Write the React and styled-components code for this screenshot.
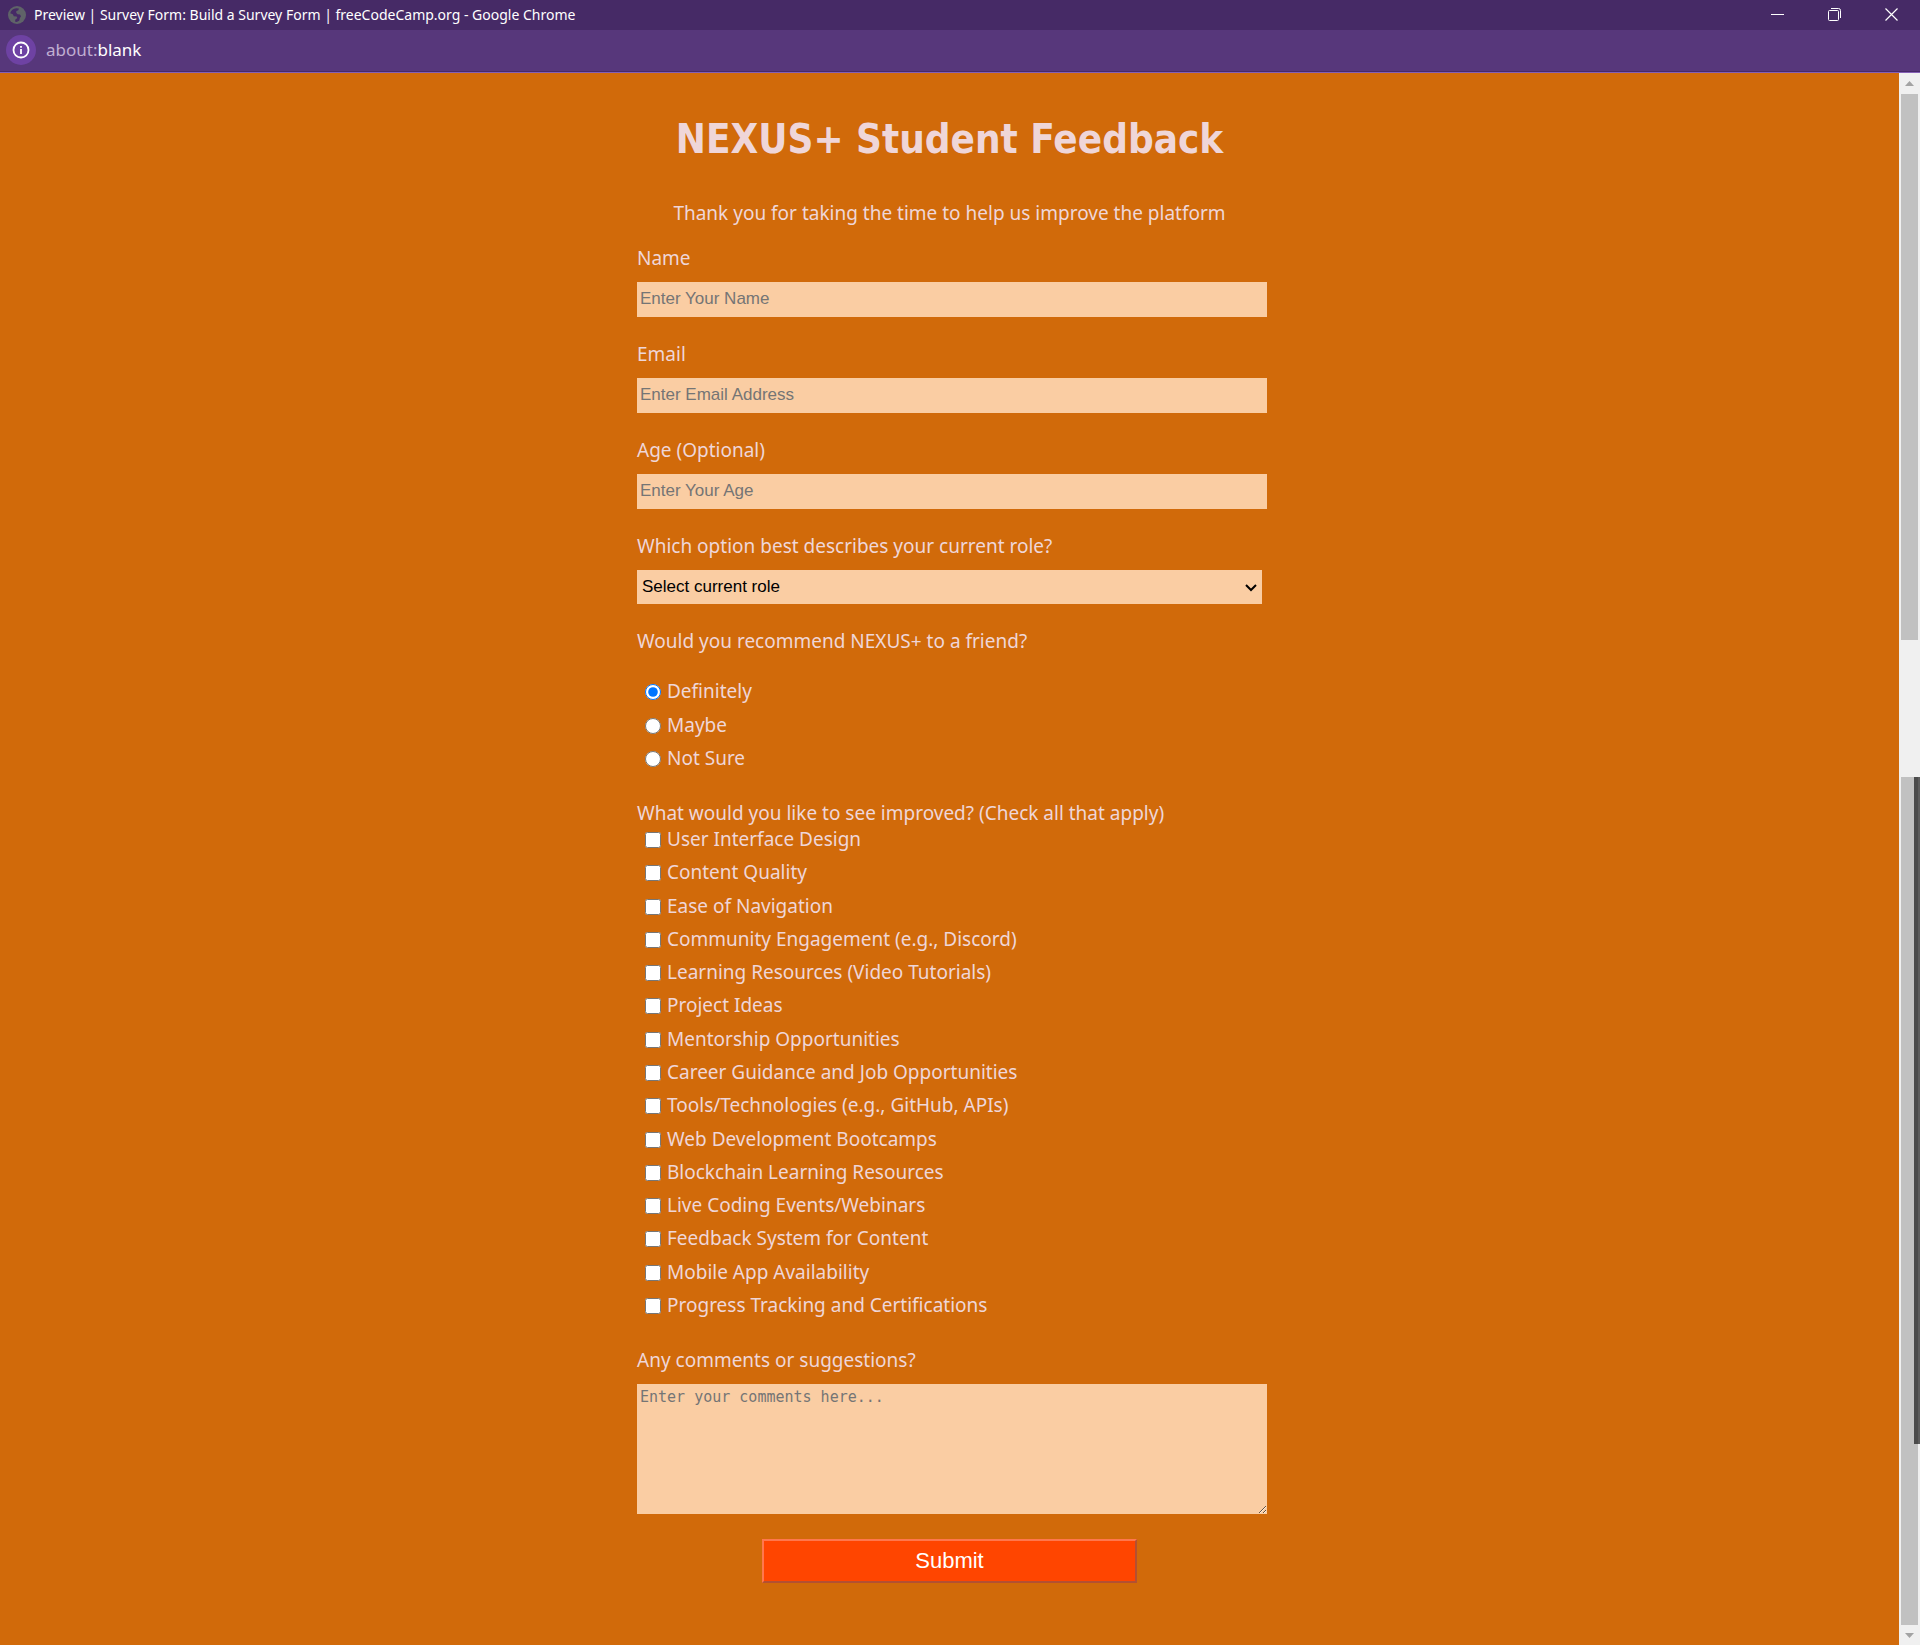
import React from "react";
import styled, { createGlobalStyle } from "styled-components";

const GlobalStyle = createGlobalStyle`
  *, *::before, *::after { box-sizing: border-box; }
  body {
    margin: 0;
    background: #d16a0a;
    color: #efd6d8;
    font: 19px/24px "Noto Sans", Tahoma, "DejaVu Sans", sans-serif;
  }
`;

const Window = styled.div`
  display: flex;
  flex-direction: column;
  min-height: 100vh;
`;

const TitleBar = styled.header`
  display: flex;
  align-items: center;
  gap: 8px;
  height: 30px;
  padding: 0 0 1px 8px;
  background: #462a66;
  color: #fff;
  font: 14px/20px "Noto Sans", "Open Sans", sans-serif;
`;

const WindowTitle = styled.span`
  flex: 1;
`;

const WindowControls = styled.div`
  display: flex;
`;

const WindowButton = styled.button`
  display: flex;
  align-items: center;
  justify-content: center;
  width: 57px;
  height: 29px;
  padding: 0;
  border: 0;
  background: none;
  color: #fff;
`;

const AddressBar = styled.div`
  display: flex;
  align-items: center;
  gap: 10px;
  height: 43px;
  padding: 0 6px 2px;
  background: #57377b;
  border-bottom: 1px solid #8560b5;
  box-shadow: inset 0 -1px 0 #472a6a;
  color: #fff;
  font: 17px/24px "Noto Sans", "Open Sans", sans-serif;
`;

const InfoButton = styled.button`
  display: flex;
  align-items: center;
  justify-content: center;
  width: 30px;
  height: 30px;
  padding: 0;
  border: 0;
  border-radius: 50%;
  background: #6e42a3;
  color: #fff;
`;

const Scheme = styled.span`
  color: #c0aed2;
`;

const Viewport = styled.div`
  display: flex;
  flex: 1;
`;

const Page = styled.main`
  flex: 1;
  padding: 42px 16px 60px;
`;

const Title = styled.h1`
  margin: 0 0 38px;
  font: 700 40px/48px "DejaVu Sans Condensed", Tahoma, sans-serif;
  text-align: center;
`;

const Intro = styled.p`
  margin: 0 0 21px;
  text-align: center;
`;

const Form = styled.form`
  width: 100%;
  max-width: 625px;
  margin: 0 auto;
`;

const Field = styled.div`
  display: flex;
  flex-direction: column;
  gap: 12px;
  margin-bottom: 25px;
`;

const Input = styled.input`
  width: calc(100% + 5px);
  height: 35px;
  padding: 0 3px 2px;
  border: 0;
  border-radius: 0;
  background: #facda3;
  font: 17px/20px "Liberation Sans", Arial, sans-serif;
  &::placeholder { color: #757575; }
`;

const SelectBox = styled.div`
  position: relative;
  display: flex;
  color: #000;
`;

const Select = styled.select`
  appearance: none;
  width: 100%;
  height: 34px;
  padding: 0 24px 0 5px;
  border: 0;
  border-radius: 0;
  background: #facda3;
  color: #000;
  font: 17px/20px "Liberation Sans", Arial, sans-serif;
`;

const SelectArrow = styled.svg`
  position: absolute;
  right: 5px;
  top: 14px;
  pointer-events: none;
`;

const TextArea = styled.textarea`
  width: calc(100% + 5px);
  height: 130px;
  padding: 3px;
  border: 0;
  background: #facda3;
  font: 15px/20px "DejaVu Sans Mono", monospace;
  &::placeholder { color: #757575; }
`;

const Group = styled.fieldset`
  min-width: 0;
  margin: 0 0 31px;
  padding: 0;
  border: 0;
`;

const Legend = styled.legend`
  display: block;
  padding: 0;
  margin-bottom: ${(p) => p.$gap}px;
`;

const Options = styled.div`
  display: grid;
  align-content: space-between;
  min-height: ${(p) => p.$height}px;
  padding-left: 8px;
`;

const Option = styled.label`
  display: flex;
  align-items: center;
  gap: 6px;
`;

const Tick = styled.input`
  width: 16px;
  height: 16px;
  margin: 2px 0 0;
`;

const Submit = styled.button`
  display: block;
  width: 60%;
  height: 44px;
  margin: 0 auto;
  border: 2px solid;
  border-color: #ff774d #b35032 #b35032 #ff774d;
  background: #ff4500;
  color: #fff;
  font: 22px/24px "Liberation Sans", Arial, sans-serif;
`;

const ScrollBar = styled.aside`
  display: flex;
  flex-direction: column;
  width: 21px;
  padding: 0 2px;
  background: #f0f0f0;
`;

const ScrollArrow = styled.button`
  display: flex;
  align-items: center;
  justify-content: center;
  width: 100%;
  height: ${(p) => p.$height}px;
  padding: 0;
  border: 0;
  background: none;
`;

const Track = styled.div`
  flex: ${(p) => p.$share} 0 0;
  position: relative;
  background: ${(p) => (p.$filled ? "#c1c1c1" : "none")};
`;

const SlimThumb = styled.div`
  position: absolute;
  top: 0;
  right: -2px;
  width: 6px;
  height: 667px;
  max-height: 100%;
  background: #4b4b4b;
  border-right: 2px solid #5c5c5c;
`;

const textFields = [
  { id: "name", label: "Name", type: "text", placeholder: "Enter Your Name" },
  { id: "email", label: "Email", type: "email", placeholder: "Enter Email Address" },
  { id: "age", label: "Age (Optional)", type: "number", placeholder: "Enter Your Age" },
];

const answers = ["Definitely", "Maybe", "Not Sure"];

const improvements = [
  "User Interface Design",
  "Content Quality",
  "Ease of Navigation",
  "Community Engagement (e.g., Discord)",
  "Learning Resources (Video Tutorials)",
  "Project Ideas",
  "Mentorship Opportunities",
  "Career Guidance and Job Opportunities",
  "Tools/Technologies (e.g., GitHub, APIs)",
  "Web Development Bootcamps",
  "Blockchain Learning Resources",
  "Live Coding Events/Webinars",
  "Feedback System for Content",
  "Mobile App Availability",
  "Progress Tracking and Certifications",
];

const GlobeIcon = () => (
  <svg width="18" height="18" viewBox="0 0 18 18" aria-hidden="true">
    <circle cx="9" cy="9" r="9" fill="#5f6368" />
    <path
      d="M2.200 7.200C3 4.400 5.200 2.500 8.200 2.200L10.800 2.400 10.400 4.200 8.400 5 8.200 6.800 9.600 8.200 12 8.600 13 10.200 11.800 12.200 11.200 14.800 8.600 16 7 15.600 7.400 13.400 9.400 12 8.600 10.600 5.800 10.200 4.800 8.200Z"
      fill="#462a66"
    />
  </svg>
);

const InfoIcon = () => (
  <svg width="18" height="18" viewBox="0 0 18 18" fill="none" aria-hidden="true">
    <circle cx="9" cy="9" r="7.5" stroke="currentColor" strokeWidth="1.8" />
    <path d="M9 8v5M9 5v1.8" stroke="currentColor" strokeWidth="1.8" />
  </svg>
);

export default function App() {
  return (
    <Window>
      <GlobalStyle />
      <TitleBar>
        <GlobeIcon />
        <WindowTitle>
          Preview | Survey Form: Build a Survey Form | freeCodeCamp.org - Google Chrome
        </WindowTitle>
        <WindowControls>
          <WindowButton type="button" aria-label="Minimize">
            <svg width="13" height="13" viewBox="0 0 13 13" aria-hidden="true">
              <path d="M0 6.5h13" stroke="currentColor" />
            </svg>
          </WindowButton>
          <WindowButton type="button" aria-label="Restore">
            <svg width="13" height="13" viewBox="0 0 13 13" fill="none" stroke="currentColor" aria-hidden="true">
              <rect x="0.5" y="2.5" width="10" height="10" rx="1" />
              <path d="M3 0.5h7.5a2 2 0 0 1 2 2V10" />
            </svg>
          </WindowButton>
          <WindowButton type="button" aria-label="Close">
            <svg width="13" height="13" viewBox="0 0 13 13" aria-hidden="true">
              <path d="M0.5 0.5l12 12M12.5 0.5l-12 12" stroke="currentColor" strokeWidth="1.2" />
            </svg>
          </WindowButton>
        </WindowControls>
      </TitleBar>
      <AddressBar>
        <InfoButton type="button" aria-label="View site information">
          <InfoIcon />
        </InfoButton>
        <span>
          <Scheme>about:</Scheme>blank
        </span>
      </AddressBar>
      <Viewport>
        <Page>
          <Title>NEXUS+ Student Feedback</Title>
          <Intro>Thank you for taking the time to help us improve the platform</Intro>
          <Form onSubmit={(e) => e.preventDefault()}>
            {textFields.map((f) => (
              <Field key={f.id}>
                <label htmlFor={f.id}>{f.label}</label>
                <Input id={f.id} type={f.type} placeholder={f.placeholder} />
              </Field>
            ))}
            <Field>
              <label htmlFor="role">Which option best describes your current role?</label>
              <SelectBox>
                <Select id="role" defaultValue="">
                  <option value="">Select current role</option>
                </Select>
                <SelectArrow width="12" height="8" viewBox="0 0 12 8" fill="none" aria-hidden="true">
                  <path d="M1 1l5 5 5-5" stroke="currentColor" strokeWidth="2" />
                </SelectArrow>
              </SelectBox>
            </Field>
            <Group>
              <Legend $gap={26}>Would you recommend NEXUS+ to a friend?</Legend>
              <Options $height={91}>
                {answers.map((text, i) => (
                  <Option key={text}>
                    <Tick type="radio" name="recommend" defaultChecked={i === 0} />
                    {text}
                  </Option>
                ))}
              </Options>
            </Group>
            <Group>
              <Legend $gap={2}>What would you like to see improved? (Check all that apply)</Legend>
              <Options $height={490}>
                {improvements.map((text) => (
                  <Option key={text}>
                    <Tick type="checkbox" name="improve" />
                    {text}
                  </Option>
                ))}
              </Options>
            </Group>
            <Field>
              <label htmlFor="comments">Any comments or suggestions?</label>
              <TextArea id="comments" placeholder="Enter your comments here..." />
            </Field>
            <Submit type="submit">Submit</Submit>
          </Form>
        </Page>
        <ScrollBar>
          <ScrollArrow type="button" aria-label="Scroll up" $height={21}>
            <svg width="9" height="5" viewBox="0 0 9 5" aria-hidden="true">
              <path d="M4.5 0L9 5H0z" fill="#a3a3a3" />
            </svg>
          </ScrollArrow>
          <Track $share={546} $filled />
          <Track $share={137} />
          <Track $share={848} $filled>
            <SlimThumb />
          </Track>
          <ScrollArrow type="button" aria-label="Scroll down" $height={20}>
            <svg width="9" height="5" viewBox="0 0 9 5" aria-hidden="true">
              <path d="M4.5 5L9 0H0z" fill="#a3a3a3" />
            </svg>
          </ScrollArrow>
        </ScrollBar>
      </Viewport>
    </Window>
  );
}
